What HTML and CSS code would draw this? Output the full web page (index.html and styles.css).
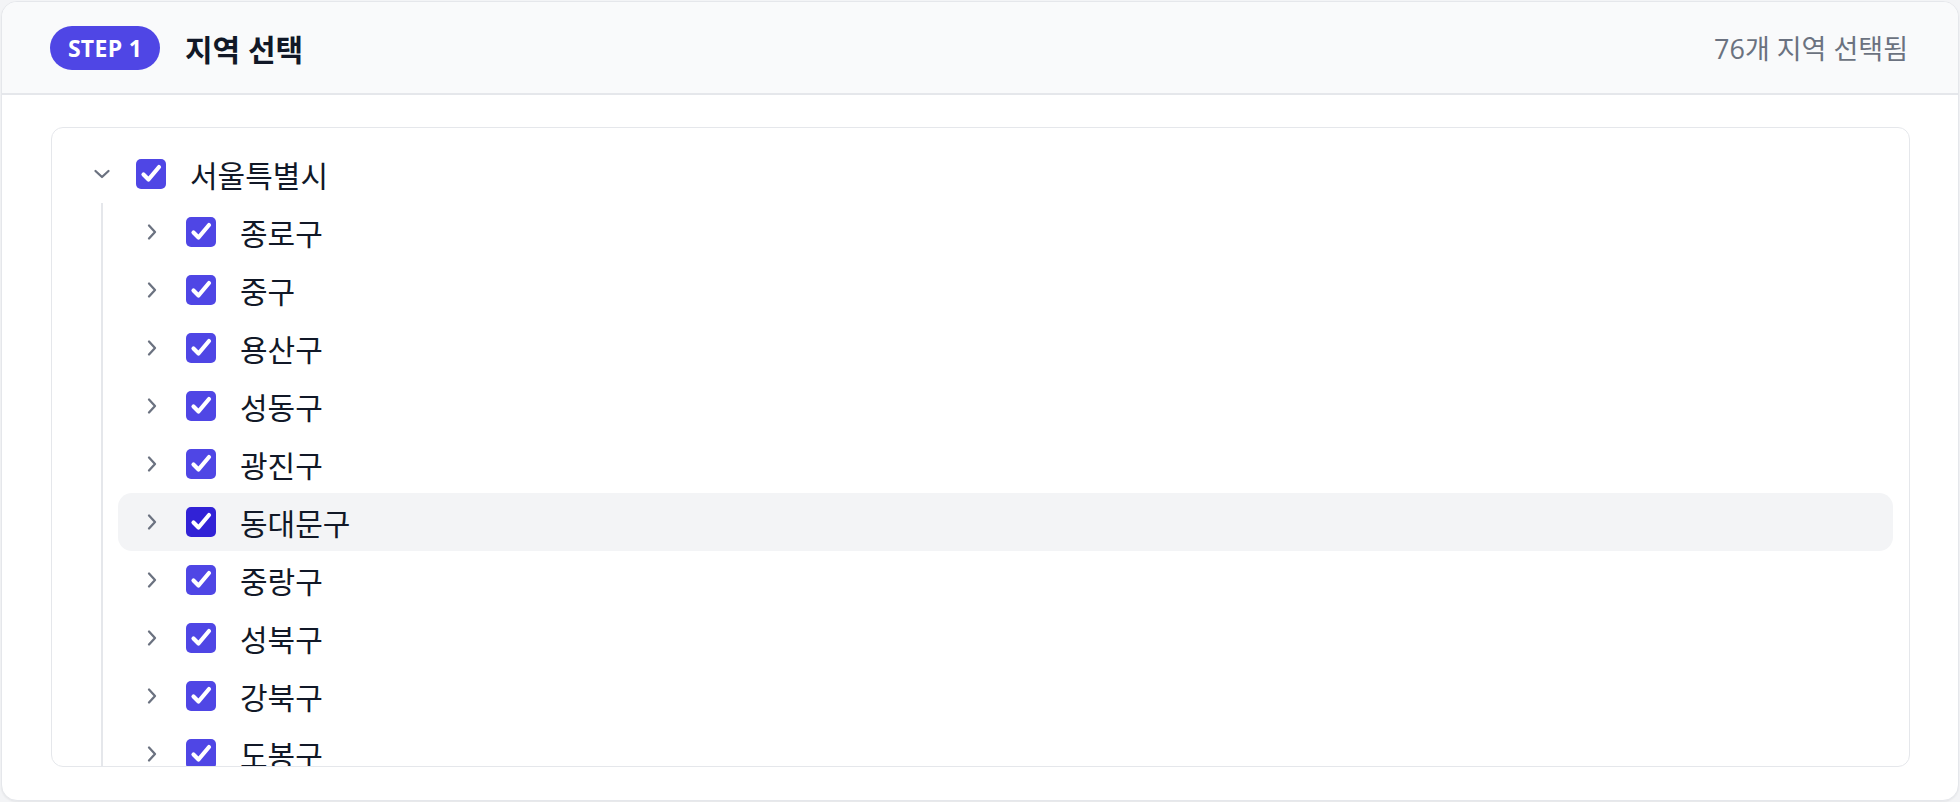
FILE: index.html
```html
<!DOCTYPE html>
<html lang="ko">
<head>
    <meta charset="UTF-8">
    <meta name="viewport" content="width=device-width, initial-scale=1.0">
    <title>지역 선택</title>
    <link rel="stylesheet" href="styles.css">
</head>
<body>
    <div class="panel">
        <div class="panel-header">
            <div class="header-left">
                <span class="step-badge">STEP 1</span>
                <h2 class="panel-title">지역 선택</h2>
            </div>
            <span class="selected-count">76개 지역 선택됨</span>
        </div>

        <div class="panel-body">
            <div class="tree">
                <div class="tree-row">
                    <span class="toggle">
                        <svg viewBox="0 0 20 20"><path d="M3.5 7 L10 13 L16.5 7"/></svg>
                    </span>
                    <span class="check">
                        <svg viewBox="0 0 30 30"><path d="M7.5 15.5 L12.5 20.5 L23 8"/></svg>
                    </span>
                    <span class="label">서울특별시</span>
                </div>

                <div class="tree-children" id="districts"></div>
            </div>
        </div>
    </div>

    <script>
        const districts = ['종로구', '중구', '용산구', '성동구', '광진구', '동대문구', '중랑구', '성북구',
            '강북구', '도봉구', '노원구', '은평구', '서대문구', '마포구', '양천구', '강서구'];
        const list = document.getElementById('districts');

        districts.forEach((name) => {
            const row = document.createElement('div');
            row.className = 'tree-row' + (name === '동대문구' ? ' hover' : '');
            row.innerHTML =
                '<span class="toggle"><svg viewBox="0 0 20 20"><path d="M7 3.5 L13 10 L7 16.5"/></svg></span>' +
                '<span class="check"><svg viewBox="0 0 30 30"><path d="M7.5 15.5 L12.5 20.5 L23 8"/></svg></span>' +
                '<span class="label">' + name + '</span>';
            list.appendChild(row);
        });
    </script>
</body>
</html>
```

FILE: styles.css
```css
* {
    box-sizing: border-box;
}

html, body {
    height: 100%;
}

body {
    margin: 0;
    padding: 1px;
    font-family: "Open Sans", "Noto Sans CJK KR", sans-serif;
    background-color: #f3f4f6;
    overflow: hidden;
}

.panel {
    height: 100%;
    display: flex;
    flex-direction: column;
    background-color: white;
    border: 1px solid #e5e7eb;
    border-radius: 16px;
    box-shadow: 0 1px 2px rgba(0, 0, 0, 0.06);
    overflow: hidden;
}

.panel-header {
    display: flex;
    align-items: center;
    justify-content: space-between;
    height: 93px;
    padding: 0 50px 0 48px;
    background-color: #f9fafb;
    border-bottom: 2px solid #e5e7eb;
    flex-shrink: 0;
}

.header-left {
    display: flex;
    align-items: center;
    gap: 25px;
}

.step-badge {
    display: inline-flex;
    align-items: center;
    justify-content: center;
    width: 110px;
    height: 44px;
    border-radius: 22px;
    background-color: #4f46e5;
    color: white;
    font-weight: 700;
    font-size: 23px;
    letter-spacing: 0.3px;
}

.panel-title {
    margin: 0;
    font-size: 30px;
    font-weight: 700;
    color: #111827;
}

.selected-count {
    font-size: 27px;
    color: #6b7280;
}

.panel-body {
    flex: 1;
    min-height: 0;
    display: flex;
    padding: 32px 48px 33px 49px;
}

.tree {
    flex: 1;
    border: 1px solid #e5e7eb;
    border-radius: 12px;
    padding: 17px 16px;
    overflow-y: auto;
    scrollbar-width: none;
}

.tree-row {
    display: flex;
    align-items: center;
    height: 58px;
    padding-left: 24px;
    border-radius: 14px;
}

.tree-row.hover {
    background-color: #f3f4f6;
}

.toggle {
    width: 20px;
    height: 20px;
    display: flex;
    flex-shrink: 0;
}

.toggle svg {
    width: 20px;
    height: 20px;
    fill: none;
    stroke: #6b7280;
    stroke-width: 2.3;
    stroke-linecap: round;
    stroke-linejoin: round;
}

.check {
    width: 30px;
    height: 30px;
    margin-left: 24px;
    border-radius: 5px;
    background-color: #4f46e5;
    display: flex;
    flex-shrink: 0;
}

.tree-row.hover .check {
    background-color: #3122d6;
}

.check svg {
    width: 30px;
    height: 30px;
    fill: none;
    stroke: white;
    stroke-width: 4.2;
    stroke-linecap: round;
    stroke-linejoin: round;
}

.label {
    margin-left: 24px;
    font-size: 30px;
    color: #111827;
    white-space: nowrap;
}

.tree-children {
    margin-left: 33px;
    border-left: 2px solid #e5e7eb;
    padding-left: 15px;
}
```
